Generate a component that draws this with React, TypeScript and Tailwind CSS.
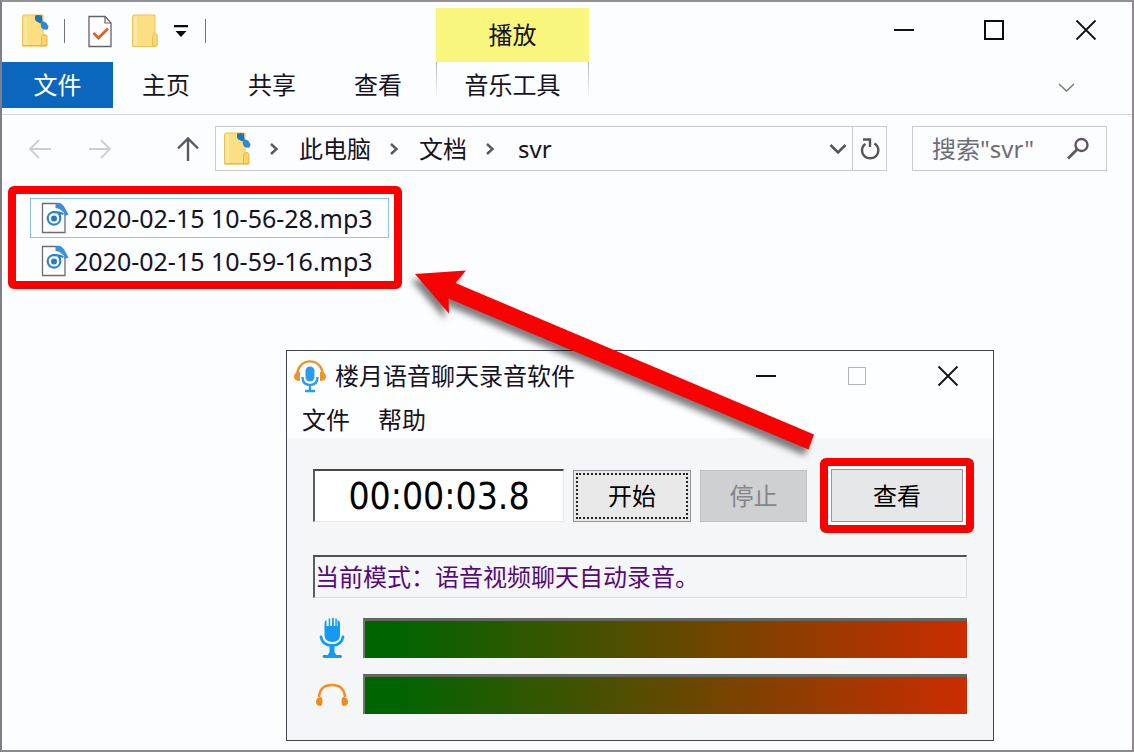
import React from 'react';

const HAN = "font-['Noto_Sans','Noto_Sans_CJK_SC',sans-serif]";

function DocFolder() {
  return (
    <svg width="28" height="34" viewBox="0 0 28 34" aria-hidden="true">
      <path d="M1.5 2.5Q1.5 1 3 1H22v29q0 2-2 2H1.5Z" fill="#fbdf82" stroke="#ecc35a" />
      <path d="M3 3h3v28H3Z" fill="#fde99c" />
      <path d="M22 21q4-1.500 4 2V32h-5.500V25q0-3 1.500-4Z" fill="#f9d468" stroke="#e8b945" />
      <path d="M1.500 31.700H25" stroke="#e9b445" strokeWidth="1.200" />
      <path d="M14 1.500q4-1 7 0l.5 6.500q-2 2-4 0.500-3-1-3.500-3Z" fill="#1f74b8" />
      <path d="M19.500 8q4-1.500 6 1l2 3.500-1 3q-5 1-6.500-3Z" fill="#2f8ad2" />
    </svg>
  );
}

function PlainFolder() {
  return (
    <svg width="28" height="34" viewBox="0 0 28 34" aria-hidden="true">
      <path d="M1.500 2.500Q1.500 1 3 1H24v17.500l2 3V31q0 1.500-2 1.500H1.500Z" fill="#fbdf82" stroke="#ecc35a" />
      <path d="M24 18.500q-2.500 1-2.500 5V32h3q1.500 0 1.500-2V21Z" fill="#fbd973" stroke="#e9be50" />
      <path d="M3 3h3v28H3Z" fill="#fde9a4" />
    </svg>
  );
}

function CheckDoc() {
  return (
    <svg width="26" height="33" viewBox="0 0 26 33" fill="none" aria-hidden="true">
      <path d="M2 1.500H18L24 8v23.500H2Z" fill="#fff" stroke="#66606e" strokeWidth="1.300" />
      <path d="M18 1.500V8h6" stroke="#66606e" strokeWidth="1.200" />
      <path d="m6.500 18 5 5 9.500-9.500" stroke="#e2602c" strokeWidth="2.800" />
    </svg>
  );
}

function AudioFileIcon() {
  return (
    <svg width="28" height="32" viewBox="0 0 28 32" fill="none" aria-hidden="true">
      <path d="M1.500 1.500H17l7 7v22H1.500Z" fill="#fff" stroke="#6d6a78" strokeWidth="1.300" />
      <path d="M14.500 1h5q4 2.500 5.500 7l2.500 4.500-4 1.500v-3l-5-4-4-1Z" fill="#3d8ddb" />
      <path d="M22.500 12Q17 9.500 11.500 10.200a6.300 6.300 0 1 0 7.800 6.500Q19.500 13 17 11" stroke="#2e82d4" strokeWidth="2.200" />
      <circle cx="13" cy="16.500" r="3" fill="#2779cc" />
    </svg>
  );
}

function Crumb() {
  return (
    <svg className="shrink-0" width="48" height="20" viewBox="0 0 48 20" fill="none" aria-hidden="true">
      <path d="m20 5 5.500 5-5.500 5" stroke="#5d5764" strokeWidth="2.400" />
    </svg>
  );
}

function AppIcon() {
  return (
    <svg width="34" height="34" viewBox="0 0 34 34" fill="none" aria-hidden="true">
      <path d="M4 17C4 -2.500 30 -2.500 30 17" stroke="#ec942c" strokeWidth="2.400" />
      <path d="M7 13v9q-6 0-6-4.500T7 13ZM27 13v9q6 0 6-4.500T27 13Z" fill="#f0922a" />
      <rect x="12.500" y="7.500" width="9" height="15" rx="4.500" fill="#2b9cea" />
      <path d="M9.500 18q0 8 7.500 8t7.500-8M17 26v5.500M12 32h10" stroke="#2b9cea" strokeWidth="2.400" />
    </svg>
  );
}

function MicIcon() {
  return (
    <svg width="26" height="41" viewBox="0 0 26 41" fill="none" aria-hidden="true">
      <path d="M5.500 5q0-2 2-3v6h2.200V.5h1.500V8h1.800V0h1.800v8h1.500V.5h1.500V8h.7V2q2.500 1 2.500 3v12q0 7-7.700 7t-7.800-7Z" fill="#159bee" />
      <path d="M2 19q1.500 8.500 11 8.500T24 19" stroke="#159bee" strokeWidth="2.800" strokeLinecap="round" />
      <path d="M10.500 27h5v7l2 3.500h-9l2-3.500Z" fill="#159bee" />
      <path d="M5 38.500h16.500" stroke="#159bee" strokeWidth="2.800" strokeLinecap="round" />
    </svg>
  );
}

function HeadphoneIcon() {
  return (
    <svg width="34" height="25" viewBox="0 0 34 25" fill="none" aria-hidden="true">
      <path d="M4 15Q5 3 17 3t13 12" stroke="#f29022" strokeWidth="2.600" />
      <path d="M5 15q2.500 0 2.500 4T6 24Q1 24 1 20t4-5ZM29 15q-2.500 0-2.500 4t1.500 5q5 0 5-4t-4-5Z" fill="#f08a1c" />
    </svg>
  );
}

function WindowButtons({ maxDisabled = false }: { maxDisabled?: boolean }) {
  return (
    <div className="ml-auto flex">
      <button aria-label="最小化" className="grid h-12 w-[91px] place-items-center">
        <svg width="22" height="22" viewBox="0 0 22 22"><path d="M1 11h20" stroke="#111" strokeWidth="2" /></svg>
      </button>
      <button aria-label="最大化" disabled={maxDisabled} className="grid h-12 w-[91px] place-items-center">
        <svg width="22" height="22" viewBox="0 0 22 22" fill="none">
          {maxDisabled
            ? <rect x="2.500" y="2.500" width="17" height="17" stroke="#b4b4b8" />
            : <rect x="1" y="2" width="18" height="18" stroke="#0c0c0c" strokeWidth="2" />}
        </svg>
      </button>
      <button aria-label="关闭" className="grid h-12 w-[91px] place-items-center">
        <svg width="22" height="22" viewBox="0 0 22 22"><path d="m1.500 1.500 19 19m0-19-19 19" stroke="#111" strokeWidth="1.800" /></svg>
      </button>
    </div>
  );
}

function Level({ label, children }: { label: string; children: React.ReactNode }) {
  return (
    <div className="flex h-10 items-center">
      <div className="grid w-[37px] shrink-0 place-items-center">{children}</div>
      <div
        role="img"
        aria-label={label}
        className="ml-[13px] h-10 flex-1 border-t-3 border-l-2 border-t-[#63675f] border-l-[#6c7a6c] bg-linear-to-r/srgb from-[#006400] from-5% to-[#cc2c00]"
      />
    </div>
  );
}

function Recorder() {
  return (
    <section className="absolute top-[348px] left-[284px] w-[708px] border border-[#44424e] bg-[#fdfeff]">
      <div className="flex h-[50px] items-center">
        <div className="flex items-center gap-2 pl-[6px]">
          <AppIcon />
          <h2 className="whitespace-nowrap text-2xl leading-none">楼月语音聊天录音软件</h2>
        </div>
        <WindowButtons maxDisabled />
      </div>
      <nav className="flex h-[37px] items-center gap-7 pl-[15px] text-2xl leading-none">
        <button>文件</button>
        <button>帮助</button>
      </nav>
      <div className="bg-[#f5f6f8] pt-5 pb-[26px]">
        <div className="flex items-center pr-[19px] pl-[26px]">
          <output
            aria-label="录音时间"
            className="grid h-[53px] flex-1 place-items-center border-t-2 border-r border-b border-l-2 border-t-[#46464c] border-r-[#e9e9ec] border-b-[#e9e9ec] border-l-[#5c5c62] bg-white font-['DejaVu_Sans_Condensed','DejaVu_Sans',sans-serif] text-[37px] leading-none text-black"
          >
            00:00:03.8
          </output>
          <button className="ml-[9px] h-[52px] w-[118px] border border-[#98949e] bg-[#e9e9ea] p-[2px] text-2xl leading-none text-black">
            <span className="grid h-full place-items-center border-2 border-dotted border-[#222]">开始</span>
          </button>
          <button disabled className="ml-[9px] h-[52px] w-[107px] border border-[#bfbfc4] bg-[#cfd0d2] text-2xl leading-none text-[#85858a]">
            停止
          </button>
          <div className="ml-[13px] rounded-md border-8 border-[#fa0000] bg-white p-[3px]">
            <button className="block h-[53px] w-[132px] border border-[#98949e] bg-[#e6e7e8] text-2xl leading-none text-black">查看</button>
          </div>
        </div>
        <div className="flex flex-col px-[26px]">
          <p className="mt-[22px] flex h-[43px] items-center border-t-2 border-r border-b border-l-2 border-t-[#4c524e] border-r-[#dcdde0] border-b-[#dcdde0] border-l-[#5a5e60] text-2xl leading-none text-[#560a7a]">
            当前模式：语音视频聊天自动录音。
          </p>
          <div className="mt-5 flex flex-col gap-4">
            <Level label="麦克风音量"><MicIcon /></Level>
            <Level label="扬声器音量"><HeadphoneIcon /></Level>
          </div>
        </div>
      </div>
    </section>
  );
}

const files = ['2020-02-15 10-56-28.mp3', '2020-02-15 10-59-16.mp3'];

export default function App() {
  return (
    <main className={`${HAN} relative flex min-h-screen flex-col border-2 border-t-[#929292] border-r-[#8f8a92] border-b-[#8b8992] border-l-[#817d88] bg-[#fcfdff] text-[#16131f]`}>
      <header className="flex h-[113px] border-b border-[#d0d3db]">
        <div>
          <div className="flex h-[58px] items-center pl-[19px]">
            <DocFolder />
            <span className="ml-[15px] h-6 w-px bg-[#77717c]" />
            <button aria-label="属性" className="ml-[22px]"><CheckDoc /></button>
            <button aria-label="新建文件夹" className="ml-[18px]"><PlainFolder /></button>
            <button aria-label="自定义快速访问工具栏" className="ml-[14px]">
              <svg width="16" height="14" viewBox="0 0 16 14"><path d="M1 1h14v2.200H1ZM2.500 7h11L8 13Z" fill="#0a0a0a" /></svg>
            </button>
            <span className="ml-4 h-6 w-px bg-[#77717c]" />
          </div>
          <nav className="mt-[2px] flex h-[46px] text-2xl leading-none">
            <button className="w-[111px] bg-[#0b66bd] text-white">文件</button>
            <button className="w-[106px]">主页</button>
            <button className="w-[106px]">共享</button>
            <button className="w-[106px]">查看</button>
          </nav>
        </div>
        <div className="ml-[5px] flex w-[153px] flex-col pt-[6px] text-2xl leading-none">
          <div className="grid h-[54px] place-items-center bg-[#f8f67c]">播放</div>
          <div className="flex h-[46px] items-center justify-between">
            <span className="h-9 w-px self-start bg-linear-to-b from-[#b0b0b4] to-transparent" />
            <button>音乐工具</button>
            <span className="h-9 w-px self-start bg-linear-to-b from-[#b0b0b4] to-transparent" />
          </div>
        </div>
        <div className="ml-auto flex flex-col items-end pt-1 pr-px">
          <WindowButtons />
          <button aria-label="展开功能区" className="mt-6 mr-14">
            <svg width="17" height="20" viewBox="0 0 17 20" fill="none"><path d="m1 6 7.500 7L16 6" stroke="#77757e" strokeWidth="1.400" /></svg>
          </button>
        </div>
      </header>

      <div className="flex h-[67px] items-center pr-[25px] pl-[26px]">
        <button aria-label="后退" className="w-6">
          <svg width="24" height="22" viewBox="0 0 24 22" fill="none"><path d="M23 11H2M11 2l-9 9 9 9" stroke="#cdced2" strokeWidth="1.800" /></svg>
        </button>
        <button aria-label="前进" className="ml-9 w-6">
          <svg width="24" height="22" viewBox="0 0 24 22" fill="none"><path d="M1 11h21M13 2l9 9-9 9" stroke="#cdced2" strokeWidth="1.800" /></svg>
        </button>
        <button aria-label="上移" className="ml-16 w-6">
          <svg width="24" height="26" viewBox="0 0 24 26" fill="none"><path d="M12 25V3M2 12.500 12 2.500l10 10" stroke="#5c5762" strokeWidth="2.400" /></svg>
        </button>
        <div className="ml-[15px] flex h-[45px] flex-1 items-center border border-[#c9cbd3] pl-[7px] text-2xl leading-none">
          <DocFolder />
          <Crumb />
          <a href="#pc">此电脑</a>
          <Crumb />
          <a href="#docs">文档</a>
          <Crumb />
          <a href="#svr" className="ml-[3px]">svr</a>
          <button aria-label="历史记录" className="mr-1 ml-auto">
            <svg width="20" height="16" viewBox="0 0 20 16" fill="none"><path d="m2.500 4 7.500 7.500L17.500 4" stroke="#57545e" strokeWidth="2.600" /></svg>
          </button>
          <button aria-label="刷新" className="grid h-full w-[34px] place-items-center border-l border-[#c9cbd3]">
            <svg width="22" height="26" viewBox="0 0 22 26" fill="none">
              <path d="M6.500 8Q3 10 3 14.500a8.200 7.800 0 0 0 16.400 0q0-4.500-4-7M4 3.500h7V11" stroke="#57535e" strokeWidth="2.400" />
            </svg>
          </button>
        </div>
        <label className="ml-[25px] flex h-[45px] w-[195px] items-center border border-[#c9cbd3] pr-4 pl-[19px]">
          <input
            type="search"
            aria-label="搜索"
            placeholder={'搜索"svr"'}
            className="min-w-0 flex-1 bg-transparent text-2xl leading-8 outline-none placeholder:text-[#706c77]"
          />
          <svg width="24" height="24" viewBox="0 0 24 24" fill="none" aria-hidden="true">
            <circle cx="15.500" cy="8" r="6" stroke="#5e5563" strokeWidth="2.400" />
            <path d="m11 12.500-9 9" stroke="#5e5563" strokeWidth="2.800" />
          </svg>
        </label>
      </div>

      <ul className="mt-1 ml-[6px] w-[394px] rounded-md border-8 border-[#fa0000] pt-1 pr-[5px] pl-[14px]">
        {files.map((name, i) => (
          <li key={name} className={i === 0 ? 'border border-[#8fc0e8]' : 'mt-[3px] border border-transparent'}>
            <a href="#file" className="flex h-[38px] items-center gap-[5px] pl-[10px] text-[25px] leading-none whitespace-nowrap">
              <AudioFileIcon />
              <span>{name}</span>
            </a>
          </li>
        ))}
      </ul>

      <Recorder />

      <svg className="pointer-events-none absolute top-[260px] left-[400px] drop-shadow-[-4px_6px_3px_rgba(0,0,0,0.5)]" width="430" height="200" viewBox="402 262 430 200" aria-hidden="true">
        <path d="M415 274 466 270.500 455.500 283 814 434.500 808.500 449.500 448.500 298.500 449 313.500Z" fill="#fa0000" />
      </svg>
    </main>
  );
}
